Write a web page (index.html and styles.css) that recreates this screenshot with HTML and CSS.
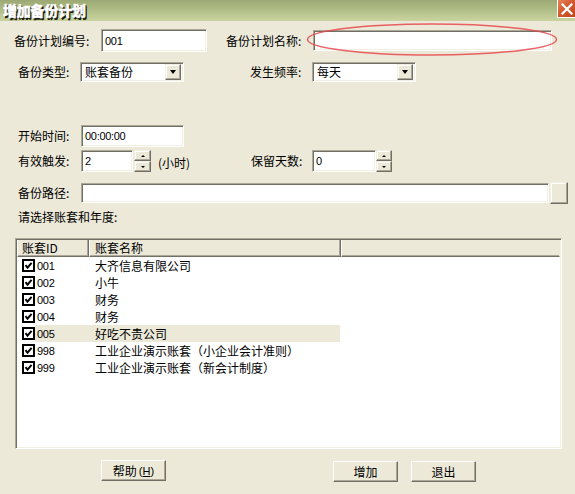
FILE: index.html
```html
<!DOCTYPE html>
<html>
<head>
<meta charset="utf-8">
<link rel="stylesheet" href="styles.css">
</head>
<body>
<div class="titlebar">
  <div class="title">增加备份计划</div>
  <div class="close"><svg width="12" height="12" viewBox="0 0 12 12"><path d="M1.5 1.5 L10.5 10.5 M10.5 1.5 L1.5 10.5" stroke="#fff" stroke-width="2.2" stroke-linecap="square"/></svg></div>
</div>

<div class="row r1">
  <div class="lbl l1">备份计划编号:</div>
  <div class="field f-code"><span class="num">001</span></div>
  <div class="lbl l1b">备份计划名称:</div>
  <div class="field f-name"></div>
</div>

<div class="row r2">
  <div class="lbl l2">备份类型:</div>
  <div class="field combo c1"><span class="ctext">账套备份</span><span class="ddbtn"><i class="tri-down"></i></span></div>
  <div class="lbl l2b">发生频率:</div>
  <div class="field combo c2"><span class="ctext">每天</span><span class="ddbtn"><i class="tri-down"></i></span></div>
</div>

<div class="row r3">
  <div class="lbl l3">开始时间:</div>
  <div class="field f-time"><span class="num">00:00:00</span></div>
</div>

<div class="row r4">
  <div class="lbl l3">有效触发:</div>
  <div class="field f-spin1"><span class="num">2</span></div>
  <div class="spin"><span class="sbtn"><i class="tri-up"></i></span><span class="sbtn"><i class="tri-dn"></i></span></div>
  <div class="unit">(小时)</div>
  <div class="lbl l4b">保留天数:</div>
  <div class="field f-spin2"><span class="num">0</span></div>
  <div class="spin s2"><span class="sbtn"><i class="tri-up"></i></span><span class="sbtn"><i class="tri-dn"></i></span></div>
</div>

<div class="row r5">
  <div class="lbl l3">备份路径:</div>
  <div class="field f-path"></div>
  <div class="browse"></div>
</div>

<div class="row r6">
  <div class="lbl l6">请选择账套和年度:</div>
</div>

<div class="list">
  <div class="lhead">
    <div class="hc hc1">账套ID</div>
    <div class="hc hc2">账套名称</div>
    <div class="hc hc3"></div>
  </div>
  <div class="lrow"><svg class="cb" width="13" height="13" viewBox="0 0 13 13"><rect x="1" y="1" width="11" height="11" fill="#fff" stroke="#000" stroke-width="2"/><polyline points="3.5,6.2 5.5,8.6 9.6,3.8" fill="none" stroke="#000" stroke-width="2"/></svg><div class="cell"><span class="id">001</span><span class="nm">大齐信息有限公司</span></div></div>
  <div class="lrow"><svg class="cb" width="13" height="13" viewBox="0 0 13 13"><rect x="1" y="1" width="11" height="11" fill="#fff" stroke="#000" stroke-width="2"/><polyline points="3.5,6.2 5.5,8.6 9.6,3.8" fill="none" stroke="#000" stroke-width="2"/></svg><div class="cell"><span class="id">002</span><span class="nm">小牛</span></div></div>
  <div class="lrow"><svg class="cb" width="13" height="13" viewBox="0 0 13 13"><rect x="1" y="1" width="11" height="11" fill="#fff" stroke="#000" stroke-width="2"/><polyline points="3.5,6.2 5.5,8.6 9.6,3.8" fill="none" stroke="#000" stroke-width="2"/></svg><div class="cell"><span class="id">003</span><span class="nm">财务</span></div></div>
  <div class="lrow"><svg class="cb" width="13" height="13" viewBox="0 0 13 13"><rect x="1" y="1" width="11" height="11" fill="#fff" stroke="#000" stroke-width="2"/><polyline points="3.5,6.2 5.5,8.6 9.6,3.8" fill="none" stroke="#000" stroke-width="2"/></svg><div class="cell"><span class="id">004</span><span class="nm">财务</span></div></div>
  <div class="lrow"><svg class="cb" width="13" height="13" viewBox="0 0 13 13"><rect x="1" y="1" width="11" height="11" fill="#fff" stroke="#000" stroke-width="2"/><polyline points="3.5,6.2 5.5,8.6 9.6,3.8" fill="none" stroke="#000" stroke-width="2"/></svg><div class="cell sel"><span class="id">005</span><span class="nm">好吃不贵公司</span></div></div>
  <div class="lrow"><svg class="cb" width="13" height="13" viewBox="0 0 13 13"><rect x="1" y="1" width="11" height="11" fill="#fff" stroke="#000" stroke-width="2"/><polyline points="3.5,6.2 5.5,8.6 9.6,3.8" fill="none" stroke="#000" stroke-width="2"/></svg><div class="cell"><span class="id">998</span><span class="nm">工业企业演示账套（小企业会计准则）</span></div></div>
  <div class="lrow"><svg class="cb" width="13" height="13" viewBox="0 0 13 13"><rect x="1" y="1" width="11" height="11" fill="#fff" stroke="#000" stroke-width="2"/><polyline points="3.5,6.2 5.5,8.6 9.6,3.8" fill="none" stroke="#000" stroke-width="2"/></svg><div class="cell"><span class="id">999</span><span class="nm">工业企业演示账套（新会计制度）</span></div></div>
</div>

<div class="btns">
  <div class="btn b-help">帮助<span class="acc">(<u>H</u>)</span></div>
  <div class="btn b-add">增加</div>
  <div class="btn b-exit">退出</div>
</div>

<svg class="mark" width="260" height="36" viewBox="0 0 260 36"><ellipse cx="127" cy="17.5" rx="124.5" ry="15.5" fill="none" stroke="#E8484C" stroke-opacity="0.85" stroke-width="1.5"/></svg>
</body>
</html>
```
FILE: styles.css
```css
* { box-sizing: border-box; }
html, body { margin: 0; padding: 0; }
body {
  width: 575px;
  height: 494px;
  overflow: hidden;
  position: relative;
  background: #ECE9D8;
  font-family: "Noto Sans CJK SC", "Noto Sans", sans-serif;
  font-size: 12px;
  color: #000;
}

.titlebar {
  height: 21px;
  display: flex;
  align-items: flex-start;
  background: linear-gradient(#9CA974 0%, #ADB982 40%, #C3CE99 85%, #C9D3A0 100%);
}
.title {
  margin: 1px 0 0 3px;
  color: #fff;
  font-weight: 900;
  font-size: 14px;
  line-height: 18px;
  letter-spacing: -0.2px;
  -webkit-text-stroke: 0.4px #fff;
  text-shadow: 1px 1px 0 #1e1e10, 1.5px 1.5px 0 #1e1e10;
}
.close {
  margin-left: auto;
  width: 18px;
  height: 18px;
  background: linear-gradient(135deg, #E8845A 0%, #D45A30 45%, #C1451D 100%);
  border: 1px solid #fff;
  border-right: none;
  border-top: none;
  display: flex;
  align-items: center;
  justify-content: center;
}

.row { display: flex; align-items: center; }
.r1 { margin-top: 8px; height: 23px; }
.r2 { margin-top: 10px; height: 20px; }
.r3 { margin-top: 43px; height: 22px; }
.r4 { margin-top: 3px; height: 22px; }
.r5 { margin-top: 10px; height: 22px; }
.r6 { margin-top: 6px; height: 14px; }

.lbl { white-space: nowrap; line-height: 14px; }
.l1 { width: 101px; padding-left: 14px; }
.l1b { width: 106px; padding-left: 19px; }
.l2 { width: 80px; padding-left: 18px; }
.l2b { width: 128px; padding-left: 66px; }
.l3 { width: 81px; padding-left: 18px; }
.l4b { width: 61px; }
.l6 { padding-left: 18px; }

.field {
  background: #fff;
  border: 1px solid;
  border-color: #ACA899 #fff #fff #ACA899;
  box-shadow: inset 1px 1px 0 #716F64, inset -1px -1px 0 #F1EFE2;
  display: flex;
  align-items: center;
}
.num {
  font-family: "Liberation Sans", Arial, sans-serif;
  font-size: 11px;
  letter-spacing: -0.3px;
  padding-left: 3px;
}
.f-code { width: 106px; height: 23px; }
.f-name { width: 239px; height: 21px; }
.f-time { width: 103px; height: 22px; }
.f-spin1 { width: 52px; height: 22px; }
.f-spin2 { width: 64px; height: 22px; }
.f-path { width: 468px; height: 20px; }

.combo { height: 20px; width: 104px; padding: 2px; }
.ctext { flex: 1; padding-left: 2px; line-height: 16px; }
.ddbtn {
  width: 16px;
  height: 16px;
  background: #ECE9D8;
  border: 1px solid;
  border-color: #F1EFE2 #716F64 #716F64 #F1EFE2;
  box-shadow: inset -1px -1px 0 #ACA899, inset 1px 1px 0 #fff;
  display: flex;
  align-items: center;
  justify-content: center;
}
.tri-down {
  width: 0; height: 0;
  border-left: 3.5px solid transparent;
  border-right: 3.5px solid transparent;
  border-top: 4px solid #000;
}

.spin {
  width: 17px;
  height: 22px;
  margin-left: 1px;
  display: flex;
  flex-direction: column;
}
.s2 { margin-left: 0; width: 16px; }
.sbtn {
  flex: 1;
  background: #ECE9D8;
  border: 1px solid;
  border-color: #F1EFE2 #716F64 #716F64 #F1EFE2;
  box-shadow: inset -1px -1px 0 #ACA899, inset 1px 1px 0 #fff;
  display: flex;
  align-items: center;
  justify-content: center;
}
.tri-up {
  width: 0; height: 0;
  border-left: 2px solid transparent;
  border-right: 2px solid transparent;
  border-bottom: 2px solid #000;
}
.tri-dn {
  width: 0; height: 0;
  border-left: 2px solid transparent;
  border-right: 2px solid transparent;
  border-top: 2px solid #000;
}
.unit { width: 100px; padding-left: 7px; padding-top: 3px; white-space: nowrap; }

.browse {
  width: 18px;
  height: 22px;
  margin-left: 1px;
  background: #ECE9D8;
  border: 1px solid;
  border-color: #F1EFE2 #716F64 #716F64 #F1EFE2;
  box-shadow: inset -1px -1px 0 #ACA899, inset 1px 1px 0 #fff;
}

.list {
  margin: 14px 0 0 15px;
  width: 547px;
  height: 211px;
  background: #fff;
  border: 1px solid;
  border-color: #ACA899 #fff #fff #ACA899;
  box-shadow: inset 1px 1px 0 #716F64, inset -1px -1px 0 #F1EFE2;
  padding: 1px;
}
.lhead { display: flex; height: 17px; background: #ECE9D8; }
.hc {
  height: 17px;
  border-left: 1px solid #fff;
  border-right: 1px solid #716F64;
  border-bottom: 1px solid #716F64;
  box-shadow: inset -1px -1px 0 #ACA899;
  line-height: 15px;
  white-space: nowrap;
}
.hc1 { width: 72px; padding-left: 4px; }
.hc2 { width: 252px; padding-left: 5px; }
.hc3 { flex: 1; border-right-color: #ECE9D8; box-shadow: inset 0 -1px 0 #ACA899; }

.lrow { display: flex; align-items: center; height: 17px; }
.cb { margin-left: 5px; flex: none; }
.cell { width: 305px; height: 17px; display: flex; align-items: center; }
.sel { background: #ECE9D8; }
.id {
  width: 60px;
  padding-left: 2px;
  font-family: "Liberation Sans", Arial, sans-serif;
  font-size: 11px;
  letter-spacing: -0.3px;
}
.nm { white-space: nowrap; }

.btns { display: flex; margin-top: 11px; height: 22px; align-items: flex-start; }
.btn {
  width: 65px;
  height: 21px;
  background: #ECE9D8;
  border: 1px solid;
  border-color: #fff #716F64 #716F64 #fff;
  box-shadow: inset -1px -1px 0 #ACA899;
  display: flex;
  align-items: center;
  justify-content: center;
  line-height: 14px;
}
.b-help { margin-left: 101px; }
.b-add { margin-left: 167px; margin-top: 1px; }
.b-exit { margin-left: 13px; margin-top: 1px; }
.acc { font-family: "Liberation Sans", Arial, sans-serif; font-size: 11px; margin-left: 2px; }

.mark { position: absolute; left: 305px; top: 22px; }
```
